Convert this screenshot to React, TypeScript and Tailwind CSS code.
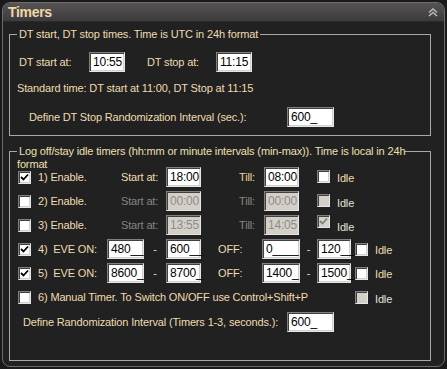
import React from "react";

const font = { fontFamily: '"Liberation Sans", Arial, sans-serif' };

function Field({ value, w, disabled, caret }: { value: string; w: string; disabled?: boolean; caret?: boolean }) {
  return (
    <div
      className={`h-[20px] ${w} shrink-0 border border-t-[#808080] border-l-[#808080] border-b-[#e6e6e6] border-r-[#e6e6e6] shadow-[inset_1px_1px_0_#404040,inset_-1px_-1px_0_#d4d0c8] flex items-center pl-[3px] text-[12px] tracking-[-0.2px] leading-none ${
        disabled ? "bg-[#d4d0c8] text-[#8c8c8c]" : "bg-white text-black"
      }`}
    >
      {caret ? (
        <>
          {value}
          <span className="inline-block w-px h-[14px] bg-black" />_
        </>
      ) : (
        value
      )}
    </div>
  );
}

function Check({ checked, gray }: { checked?: boolean; gray?: boolean }) {
  return (
    <div
      className={`w-[13px] h-[13px] shrink-0 border border-t-[#808080] border-l-[#808080] border-b-[#e6e6e6] border-r-[#e6e6e6] shadow-[inset_1px_1px_0_#404040,inset_-1px_-1px_0_#d4d0c8] flex items-center justify-center ${
        gray ? "bg-[#d4d0c8]" : "bg-white"
      }`}
    >
      {checked && (
        <svg width="9" height="9" viewBox="0 0 9 9">
          <path d="M1 4 L3.5 6.5 L8 1.5" fill="none" stroke={gray ? "#808080" : "#000"} strokeWidth="1.8" />
        </svg>
      )}
    </div>
  );
}

function TimerRow({ n, enabled, start, till, idleChecked }: { n: number; enabled: boolean; start: string; till: string; idleChecked?: boolean }) {
  return (
    <div className="h-[20px] flex items-center pl-[8px]">
      <Check checked={enabled} />
      <span className="ml-[7px] w-[83px]">{n}) Enable.</span>
      <span className={`w-[45px] ${enabled ? "text-[#efdcb0]" : "text-[#858585]"}`}>Start at:</span>
      <Field value={start} w="w-[35px]" disabled={!enabled} />
      <span className={`w-[63px] text-right pr-[9px] ${enabled ? "text-[#ecd996]" : "text-[#868c80]"}`}>Till:</span>
      <Field value={till} w="w-[35px]" disabled={!enabled} />
      <div className={`ml-[18px] ${idleChecked ? "mt-[-7px]" : "mt-[-1px]"}`}>
        <Check checked={idleChecked} gray={!enabled} />
      </div>
      <span className={`ml-[7px] ${enabled ? "mt-[2px]" : "text-[#e4e2da] mt-[4px]"}`}>Idle</span>
    </div>
  );
}

function EveRow({ n, a, b, c, d, caret }: { n: number; a: string; b: string; c: string; d: string; caret?: boolean }) {
  return (
    <div className="h-[20px] flex items-center pl-[8px]">
      <Check checked />
      <span className="ml-[7px] w-[69px] whitespace-pre">{n})  EVE ON:</span>
      <Field value={a} w="w-[37px]" />
      <span className="w-[22px] text-center">-</span>
      <Field value={b} w="w-[35px]" />
      <span className="ml-[17px] w-[44px]">OFF:</span>
      <Field value={c} w="w-[38px]" />
      <span className="w-[17px] text-center">-</span>
      <Field value={d} w="w-[34px]" caret={caret} />
      <div className="ml-[4px]">
        <Check />
      </div>
      <span className="ml-[7px] mt-[2px]">Idle</span>
    </div>
  );
}

export default function App() {
  return (
    <div className="w-[447px] h-[369px] bg-[#1a1a1a] p-[2px] text-[11px] tracking-[-0.15px] text-[#efdcb0]" style={font}>
      <div className="w-[443px] h-[365px] rounded-[8px] border border-[#6c6c6c] bg-[#212121] overflow-hidden">
        <div className="h-[19px] bg-gradient-to-b from-[#565454] to-[#3c3a3a] flex items-center justify-between pl-[5px] pr-[6px] border-b border-[#2a2a2a]">
          <span className="font-bold text-[14px] tracking-[-0.3px] text-[#f0d8a8] leading-none">Timers</span>
          <svg width="10" height="9" viewBox="0 0 10 9">
            <path d="M1 4.5 L5 1 L9 4.5 M1 8 L5 4.5 L9 8" fill="none" stroke="#b8b8b8" strokeWidth="1.6" />
          </svg>
        </div>

        <div className="relative ml-[6px] mt-[12px] w-[422px] h-[102px] border border-[#a8a8a8]">
          <div className="absolute left-[7px] top-[-7px] leading-[13px]">
            <span className="bg-[#212121] px-[2px]">DT start, DT stop times. Time is UTC in 24h format</span>
          </div>
          <div className="pt-[17px]">
            <div className="h-[20px] flex items-center pl-[9px]">
              <span className="w-[70px]">DT start at:</span>
              <Field value="10:55" w="w-[36px]" />
              <span className="ml-[22px] w-[69px]">DT stop at:</span>
              <Field value="11:15" w="w-[36px]" />
            </div>
            <div className="mt-[8px] h-[16px] flex items-center pl-[7px]">
              Standard time: DT start at 11:00, DT Stop at 11:15
            </div>
            <div className="mt-[11px] h-[20px] flex items-center pl-[19px]">
              <span className="w-[258px]">Define DT Stop Randomization Interval (sec.):</span>
              <Field value="600_" w="w-[47px]" />
            </div>
          </div>
        </div>

        <div className="relative ml-[6px] mt-[15px] w-[422px] h-[210px] border border-[#a8a8a8]">
          <div className="absolute left-[7px] top-[-7px] w-[390px] leading-[13px]">
            <span className="bg-[#212121] px-[2px] text-[#ece0b0]">
              Log off/stay idle timers (hh:mm or minute intervals (min-max)). Time is local in 24h format
            </span>
          </div>
          <div className="pt-[15px] flex flex-col gap-[4px]">
            <TimerRow n={1} enabled start="18:00" till="08:00" />
            <TimerRow n={2} enabled={false} start="00:00" till="00:00" />
            <TimerRow n={3} enabled={false} start="13:55" till="14:05" idleChecked />
            <EveRow n={4} a="480__" b="600__" c="0____" d="120__" />
            <EveRow n={5} a="8600_" b="8700_" c="1400_" d="1500" caret />
            <div className="h-[20px] flex items-center pl-[8px]">
              <Check />
              <span className="ml-[7px] w-[317px]">6) Manual Timer. To Switch ON/OFF use Control+Shift+P</span>
              <Check gray />
              <span className="ml-[7px] mt-[4px] text-[#e4e2da]">Idle</span>
            </div>
            <div className="mt-[1px] h-[20px] flex items-center pl-[13px]">
              <span className="w-[264px]">Define Randomization Interval (Timers 1-3, seconds.):</span>
              <Field value="600_" w="w-[47px]" />
            </div>
          </div>
        </div>
      </div>
    </div>
  );
}
